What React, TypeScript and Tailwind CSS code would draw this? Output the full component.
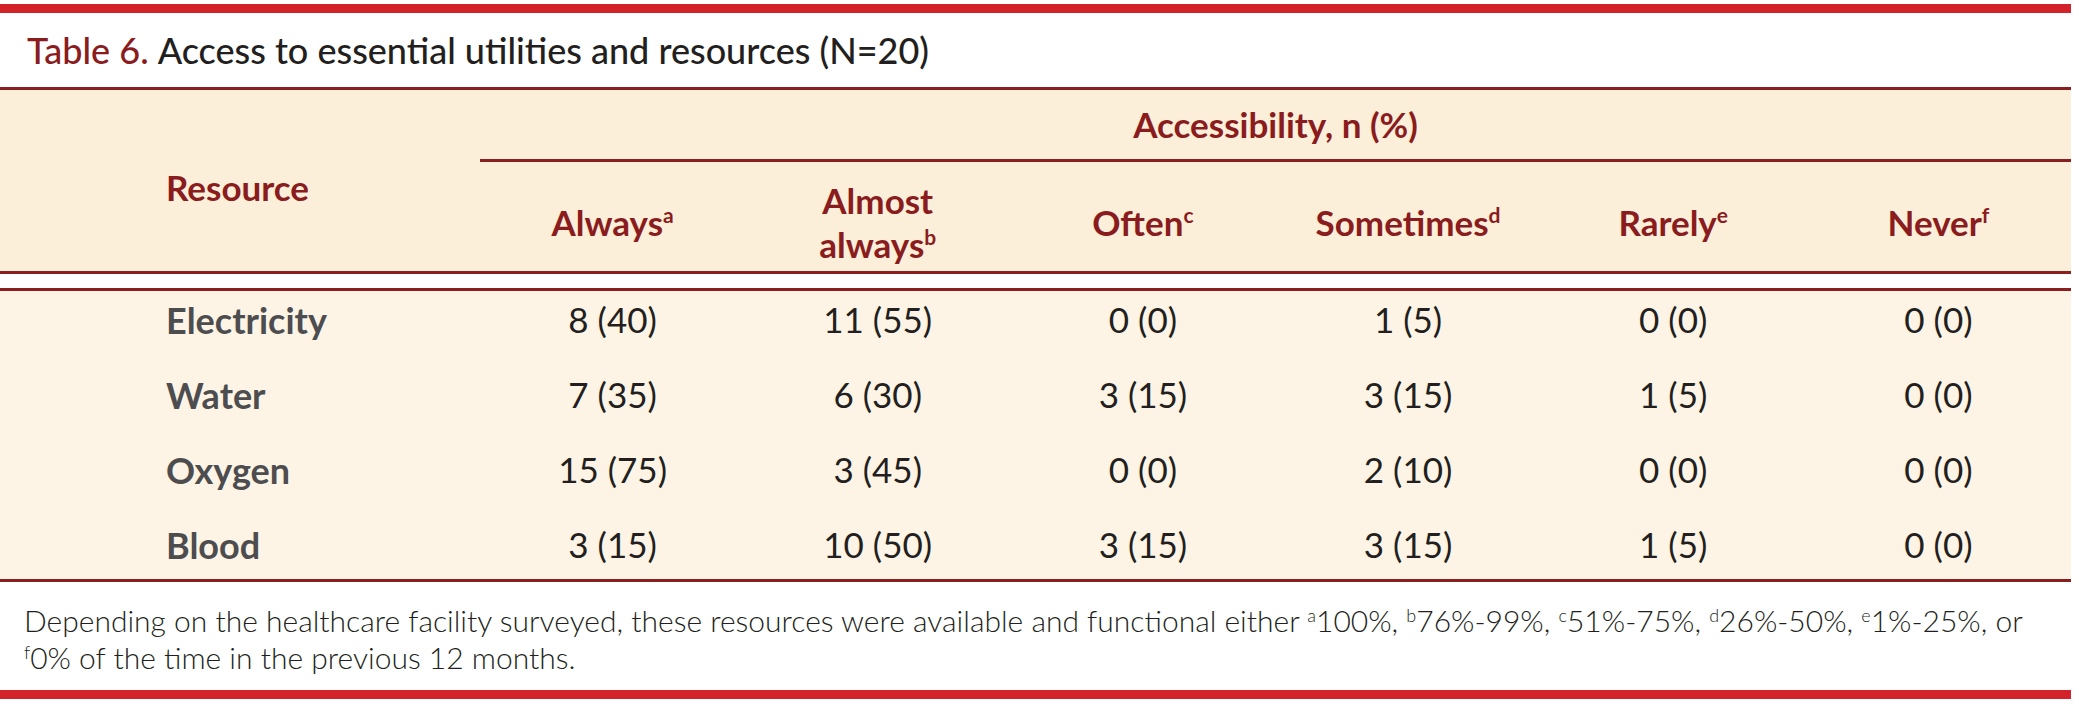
import type { ReactNode } from "react"

const rows = [
  ["Electricity", "8 (40)", "11 (55)", "0 (0)", "1 (5)", "0 (0)", "0 (0)"],
  ["Water", "7 (35)", "6 (30)", "3 (15)", "3 (15)", "1 (5)", "0 (0)"],
  ["Oxygen", "15 (75)", "3 (45)", "0 (0)", "2 (10)", "0 (0)", "0 (0)"],
  ["Blood", "3 (15)", "10 (50)", "3 (15)", "3 (15)", "1 (5)", "0 (0)"],
]

function Sup({ children }: { children: ReactNode }) {
  return <sup className="text-[21px] font-bold top-[-13px]">{children}</sup>
}

function FootSup({ children }: { children: ReactNode }) {
  return <sup className="text-[18px] top-[-10px]">{children}</sup>
}

export default function App() {
  return (
    <div className="w-[2079px] h-[716px] bg-white pt-[4px] font-['Lato','Liberation_Sans',sans-serif] text-[#231f20]">
      <div className="w-[2071px]">
        <div className="h-[9px] bg-[#d3222a]" />

        {/* caption */}
        <div className="h-[74px] flex items-center pl-[27px] text-[36px] font-medium leading-none">
          <span className="text-[#8a1c1e]">Table 6.</span>
          <span className="ml-[9px]">Access to essential utilities and resources (N=20)</span>
        </div>

        {/* header */}
        <div className="border-t-[3px] border-b-[3px] border-[#8b1e1e] bg-[#fbefd9] grid grid-cols-[480px_1fr] text-[#8a1c1e] font-bold text-[35px] leading-none">
          <div className="flex items-center pl-[166px] pt-[14px]">Resource</div>
          <div className="flex flex-col">
            <div className="h-[72px] flex items-center justify-center border-b-[3px] border-[#8b1e1e]">
              Accessibility, n (%)
            </div>
            <div className="h-[109px] grid grid-cols-6 pt-[11px] text-center leading-[44px]">
              <div className="flex items-center justify-center">
                <span>Always<Sup>a</Sup></span>
              </div>
              <div className="flex items-center justify-center">
                <span>
                  Almost
                  <br />
                  always<Sup>b</Sup>
                </span>
              </div>
              <div className="flex items-center justify-center">
                <span>Often<Sup>c</Sup></span>
              </div>
              <div className="flex items-center justify-center">
                <span>Sometimes<Sup>d</Sup></span>
              </div>
              <div className="flex items-center justify-center">
                <span>Rarely<Sup>e</Sup></span>
              </div>
              <div className="flex items-center justify-center">
                <span>Never<Sup>f</Sup></span>
              </div>
            </div>
          </div>
        </div>

        <div className="h-[14px]" />

        {/* body */}
        <div className="border-t-[3px] border-b-[3px] border-[#8b1e1e] bg-[#fdf4e5] pb-[6px] flex flex-col gap-[18px] text-[35px] leading-none">
          {rows.map((r) => (
            <div key={r[0]} className="h-[57px] grid grid-cols-[480px_repeat(6,1fr)] items-center">
              <div className="pl-[166px] font-bold text-[36px] text-[#4d4d4f]">{r[0]}</div>
              {r.slice(1).map((v, i) => (
                <div key={i} className="text-center">
                  {v}
                </div>
              ))}
            </div>
          ))}
        </div>

        {/* footnote */}
        <div className="h-[108px] flex flex-col justify-center pt-[6px] pl-[24px] text-[30px] font-light leading-[37px] text-[#231f20]">
          <div className="whitespace-nowrap">
            Depending on the healthcare facility surveyed, these resources were available and functional either{" "}
            <FootSup>a</FootSup>100%, <FootSup>b</FootSup>76%-99%, <FootSup>c</FootSup>51%-75%,{" "}
            <FootSup>d</FootSup>26%-50%, <FootSup>e</FootSup>1%-25%, or
          </div>
          <div className="whitespace-nowrap">
            <FootSup>f</FootSup>0% of the time in the previous 12 months.
          </div>
        </div>

        <div className="h-[9px] bg-[#d3222a]" />
      </div>
    </div>
  )
}
